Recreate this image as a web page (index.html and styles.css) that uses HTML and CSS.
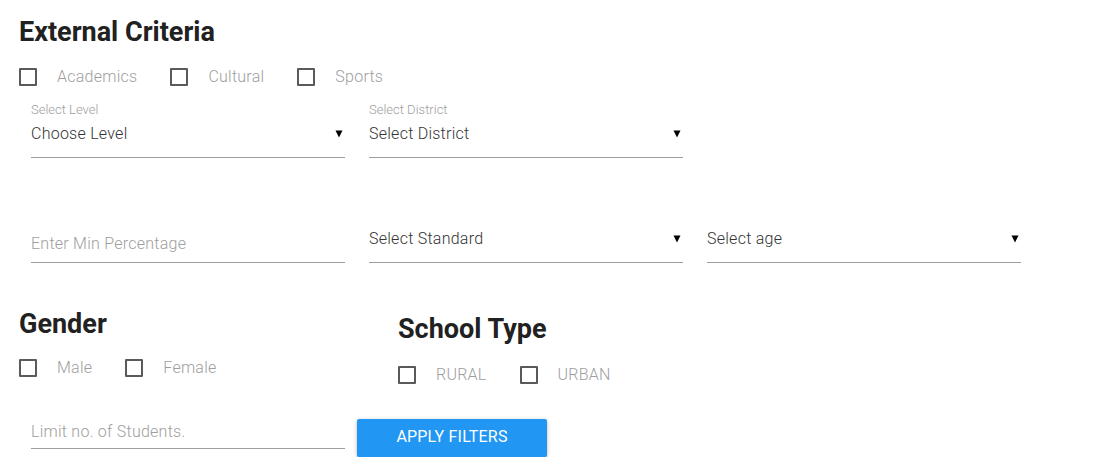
FILE: index.html
```html
<!DOCTYPE html>
<html>
<head>
<meta charset="utf-8">
<link rel="stylesheet" href="styles.css">
</head>
<body>
<div class="page">
  <h2 class="title">External Criteria</h2>
  <div class="checks">
    <label class="check"><span class="box"></span><span class="ctext">Academics</span></label>
    <label class="check"><span class="box"></span><span class="ctext">Cultural</span></label>
    <label class="check"><span class="box"></span><span class="ctext">Sports</span></label>
  </div>

  <div class="fields row1">
    <div class="field">
      <div class="flabel">Select Level</div>
      <div class="select"><span>Choose Level</span><svg class="arrow" width="8" height="8" viewBox="0 0 8 8"><polygon points="0.5,0.5 7.5,0.5 4,7.5" fill="#000"/></svg></div>
    </div>
    <div class="field">
      <div class="flabel">Select District</div>
      <div class="select"><span>Select District</span><svg class="arrow" width="8" height="8" viewBox="0 0 8 8"><polygon points="0.5,0.5 7.5,0.5 4,7.5" fill="#000"/></svg></div>
    </div>
  </div>

  <div class="fields row2">
    <div class="field">
      <div class="input">Enter Min Percentage</div>
    </div>
    <div class="field">
      <div class="flabel"></div>
      <div class="select"><span>Select Standard</span><svg class="arrow" width="8" height="8" viewBox="0 0 8 8"><polygon points="0.5,0.5 7.5,0.5 4,7.5" fill="#000"/></svg></div>
    </div>
    <div class="field">
      <div class="flabel"></div>
      <div class="select"><span>Select age</span><svg class="arrow" width="8" height="8" viewBox="0 0 8 8"><polygon points="0.5,0.5 7.5,0.5 4,7.5" fill="#000"/></svg></div>
    </div>
  </div>

  <div class="groups">
    <div class="group gender">
      <h2 class="title">Gender</h2>
      <div class="checks">
        <label class="check"><span class="box"></span><span class="ctext">Male</span></label>
        <label class="check"><span class="box"></span><span class="ctext">Female</span></label>
      </div>
    </div>
    <div class="group school">
      <h2 class="title">School Type</h2>
      <div class="checks">
        <label class="check"><span class="box"></span><span class="ctext">RURAL</span></label>
        <label class="check"><span class="box"></span><span class="ctext">URBAN</span></label>
      </div>
    </div>
  </div>

  <div class="actions">
    <div class="field limit">
      <div class="input">Limit no. of Students.</div>
    </div>
    <button class="btn">APPLY FILTERS</button>
  </div>
</div>
</body>
</html>
```

FILE: styles.css
```css
html, body {
  margin: 0;
  padding: 0;
  background: #fff;
}

body {
  font-family: Roboto, "Liberation Sans", sans-serif;
  color: #333;
}

.page {
  padding: 16px 0 0 19px;
}

.title {
  margin: 0;
  font-size: 27px;
  line-height: 32px;
  font-weight: 700;
  color: #212121;
}

.checks {
  display: flex;
  gap: 33px;
  margin-top: 16px;
}

.check {
  display: flex;
  align-items: center;
  height: 25px;
  gap: 20px;
}

.box {
  width: 18px;
  height: 18px;
  box-sizing: border-box;
  border: 2px solid #5a5a5a;
  border-radius: 1px;
}

.ctext {
  font-size: 16px;
  font-weight: 300;
  letter-spacing: 0.25px;
  color: #9e9e9e;
}

.fields {
  display: grid;
  grid-template-columns: repeat(3, 314px);
  column-gap: 24px;
  padding-left: 12px;
}

.row1 {
  margin-top: 14px;
}

.row2 {
  margin-top: 50px;
}

.flabel {
  height: 14px;
  font-size: 13px;
  line-height: 14px;
  font-weight: 300;
  color: #9e9e9e;
}

.select {
  margin-top: 5px;
  display: flex;
  align-items: center;
  justify-content: space-between;
  height: 24px;
  line-height: 24px;
  padding: 0 2px 11px 0;
  border-bottom: 1px solid #9e9e9e;
  font-size: 16px;
  font-weight: 300;
  letter-spacing: 0.25px;
  color: #333;
}

.arrow {
  display: block;
}

.input {
  margin-top: 24px;
  height: 24px;
  line-height: 24px;
  padding-bottom: 6px;
  border-bottom: 1px solid #9e9e9e;
  font-size: 16px;
  font-weight: 300;
  letter-spacing: 0.25px;
  color: #9e9e9e;
}

.groups {
  display: flex;
  align-items: flex-start;
  margin-top: 45px;
}

.gender {
  width: 379px;
}

.gender .checks {
  margin-top: 15px;
}

.school {
  padding-top: 5px;
}

.school .checks {
  margin-top: 17px;
}

.actions {
  display: flex;
  align-items: flex-start;
  gap: 12px;
  margin-top: 32px;
  padding-left: 12px;
}

.limit {
  width: 314px;
}

.limit .input {
  margin-top: 1px;
  padding-bottom: 4px;
}

.btn {
  width: 190px;
  height: 38px;
  border: none;
  border-radius: 2px;
  background: #2196f3;
  color: #fff;
  font-family: Roboto, "Liberation Sans", sans-serif;
  font-size: 16px;
  font-weight: 400;
  letter-spacing: 0.2px;
  padding: 0 0 3px 0;
  box-shadow: 0 2px 2px 0 rgba(0,0,0,0.14), 0 3px 1px -2px rgba(0,0,0,0.12), 0 1px 5px 0 rgba(0,0,0,0.2);
}
```
